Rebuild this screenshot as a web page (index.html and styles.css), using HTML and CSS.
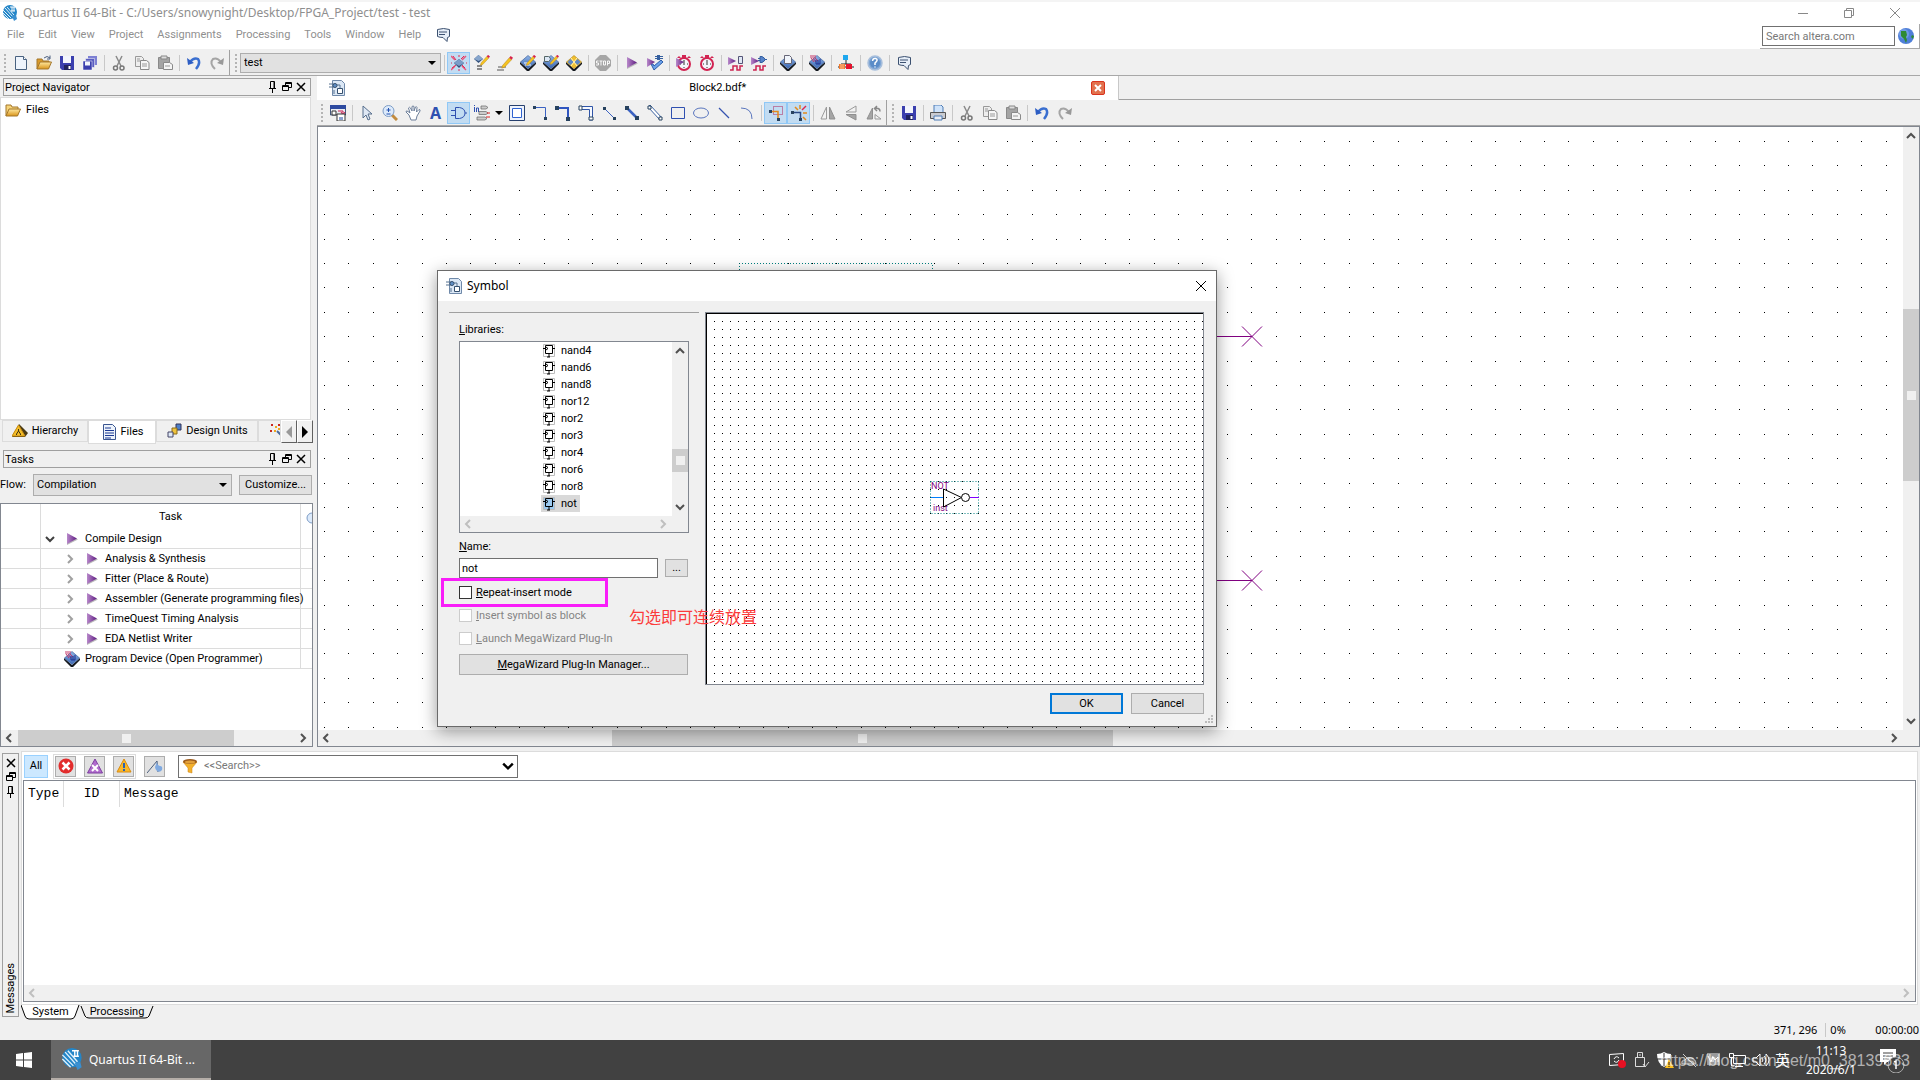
FILE: index.html
```
<!DOCTYPE html>
<html lang="en">
<head>
	<meta charset="utf-8">
	<meta name="viewport" content="width=device-width, initial-scale=1">
	<title>Quartus II 64-Bit</title>
	<link rel="stylesheet" href="styles.css">
</head>
<body>

	<!-- icon set -->
	<svg class="defs" aria-hidden="true">
		<defs>
			<linearGradient id="gChip" x1="0" y1="0" x2="0" y2="1"><stop offset="0" stop-color="#8fb4e6"/><stop offset="1" stop-color="#3a67b4"/></linearGradient>
			<linearGradient id="gGold" x1="0" y1="0" x2="0" y2="1"><stop offset="0" stop-color="#ffe9a0"/><stop offset="1" stop-color="#d9941a"/></linearGradient>
			<linearGradient id="gPurple" x1="0" y1="0" x2="1" y2="0"><stop offset="0" stop-color="#b98acb"/><stop offset="1" stop-color="#5c1a80"/></linearGradient>
			<pattern id="sheetGrid" x="6" y="14" width="122" height="122" patternUnits="userSpaceOnUse">
				<g id="dotRow"><path d="M0 0h1v1h-1zM24 0h1v1h-1zM49 0h1v1h-1zM73 0h1v1h-1zM98 0h1v1h-1z"/></g>
				<use href="#dotRow" y="24"/><use href="#dotRow" y="49"/><use href="#dotRow" y="73"/><use href="#dotRow" y="98"/>
			</pattern>
			<pattern id="previewGrid" x="8" y="8" width="8" height="8" patternUnits="userSpaceOnUse"><path d="M0 0h1v1h-1z"/></pattern>
		</defs>
		<symbol id="i-app" viewBox="0 0 16 16"><circle cx="8" cy="7" r="7" fill="#2486c8"/><path d="M1 5l8 8M1 8l6 6M3 3l8 9M5 2l7 8" stroke="#dff0fb" fill="none"/><path d="M8 2h5M9 6h4M10 2v4M12 2v4" stroke="#fff"/><path d="M10 11l4-1 1 4-3 2z" fill="#3a8fd0"/></symbol>
		<symbol id="i-chat" viewBox="0 0 16 16"><path d="M2.500 2.500q6-2 12 0v7l-2 1-.5 4-4-4q-3 0-5.500-1z" fill="#e6eef8" stroke="#3c5170"/><path d="M4 5h8M4 7.500h6" stroke="#3c5170"/></symbol>
		<symbol id="i-new" viewBox="0 0 16 16"><path d="M2.500 1.500h8l3 3v10h-11z" fill="#eef4fc" stroke="#48617f"/><path d="M10.500 1.500v3h3" fill="#fff" stroke="#48617f"/></symbol>
		<symbol id="i-open" viewBox="0 0 16 16"><path d="M1 14V4h5l1 2h6v3" fill="#d99a2b" stroke="#a3762a"/><path d="M1 14l3-7h11.500l-3 7z" fill="url(#gGold)" stroke="#a3762a"/><path d="M8 3q3-3 6 0M14 .5V4h-3" fill="none" stroke="#4a5f80"/></symbol>
		<symbol id="i-folder" viewBox="0 0 16 16"><path d="M1 14V3h5l1 2h6v3" fill="#f6d47a" stroke="#a3762a"/><path d="M1 14l3-7h11.500l-3 7z" fill="url(#gGold)" stroke="#a3762a"/></symbol>
		<symbol id="i-save" viewBox="0 0 16 16"><path d="M1 1h14v14H3l-2-2z" fill="#3b3fae"/><path d="M4 1h8v7H4z" fill="#f3f5fd"/><path d="M5 10h7v5H5z" fill="#20235f"/><path d="M9.500 11h2v3h-2z" fill="#fff"/></symbol>
		<symbol id="i-saveall" viewBox="0 0 16 16"><path d="M6 1h9v9H6z" fill="#7d80d3"/><path d="M3.500 3.500h9v9h-9z" fill="#5a5ec1" stroke="#fff" stroke-width=".5"/><path d="M1 6h9v9H1z" fill="#3b3fae" stroke="#fff" stroke-width=".5"/><path d="M3 6.500h5v4H3z" fill="#f3f5fd"/></symbol>
		<symbol id="i-cut" viewBox="0 0 16 16"><path d="M5 1l5 10M11 1L6 11" stroke="#8a8a8a" stroke-width="1.500"/><circle cx="4.500" cy="13" r="2" fill="none" stroke="#777" stroke-width="1.500"/><circle cx="11" cy="13" r="2" fill="none" stroke="#777" stroke-width="1.500"/></symbol>
		<symbol id="i-copy" viewBox="0 0 16 16"><path d="M1.500 1.500h6l2 2v8h-8z" fill="#eee" stroke="#999"/><path d="M6.500 5.500h6l2.500 2v7H6.500z" fill="#f7f7f7" stroke="#8a8a8a"/><path d="M3 4h3M3 6h3M8 9h5M8 11h5" stroke="#999"/></symbol>
		<symbol id="i-paste" viewBox="0 0 16 16"><path d="M1.500 2.500h11v11h-11z" fill="#a4a4a4" stroke="#8a8a8a"/><path d="M4 1h6v3H4z" fill="#ddd" stroke="#888"/><path d="M6.500 7.500h6l3 2v5h-9z" fill="#f4f4f4" stroke="#8a8a8a"/><path d="M8 11h5" stroke="#999"/></symbol>
		<symbol id="i-undo" viewBox="0 0 16 16"><path d="M4 7q4-5 8-3 3 4-2 10" fill="none" stroke="#3a6fd0" stroke-width="2.500"/><path d="M1 3l1 7 6-2z" fill="#2d5ec4"/></symbol>
		<symbol id="i-redo" viewBox="0 0 16 16"><path d="M12 7Q8 2 4 4q-4 4 2 10" fill="none" stroke="#a5a5a5" stroke-width="2"/><path d="M15 3l-1 7-6-2z" fill="#999"/></symbol>
		<symbol id="i-chip" viewBox="0 0 16 16"><path d="M0 7l8 7 8-7v2l-7 7H7L0 9z" fill="#14181f"/><path d="M8 .5L15.500 7 8 13.500.5 7z" fill="url(#gChip)" stroke="#3f639c" stroke-width=".7"/></symbol>
		<symbol id="i-pencil" viewBox="0 0 16 16"><path d="M5 11l7-8 2.500 2L7 13l-3 1z" fill="#f5c321" stroke="#b07f13" stroke-width=".5"/><path d="M12 3l1.500-2L16 3l-1.500 2z" fill="#d8234b"/></symbol>
		<symbol id="i-pins" viewBox="0 0 16 16"><path d="M0 1l4 4M15 1l-4 4M0 15l4-4M15 15l-4-4" stroke="#e8557a" stroke-width="1.500"/><path d="M8 0v2M8 14v2M0 8h1M15 8h1M2 1l3 4M13 1l-3 3M1 13l4-3M14 13l-3-3" stroke="#e02c55"/><path d="M8 4l5 4-5 5-5-5z" fill="#34517c"/><path d="M8 4l5 4-5 3-5-3z" fill="#7b9cc8"/></symbol>
		<symbol id="i-asgn" viewBox="0 0 16 16"><path d="M4.500 0L9 4 4.500 8 0 4z" fill="#34517c"/><path d="M4.500 0L9 4 4.500 6 0 4z" fill="#86a5cc"/><path d="M3 11h5M3 14h5" stroke="#222"/><use href="#i-pencil" x="3" y="-1" width="13" height="13"/></symbol>
		<symbol id="i-edit" viewBox="0 0 16 16"><path d="M1 12h8M0 15h7" stroke="#555"/><use href="#i-pencil" x="1" width="15" height="15"/></symbol>
		<symbol id="i-chipedit" viewBox="0 0 16 16"><use href="#i-chip" width="16" height="16"/><path d="M4 8h6M5 10h6" stroke="#fff"/><use href="#i-pencil" x="3" y="-1" width="13" height="13"/></symbol>
		<symbol id="i-chipgate" viewBox="0 0 16 16"><use href="#i-chip" width="16" height="16"/><path d="M1.500 1.500h4q4 2.500 0 5h-4z" fill="#dbe7f6" stroke="#566"/><use href="#i-pencil" x="4" y="-1" width="12" height="12"/></symbol>
		<symbol id="i-chipplan" viewBox="0 0 16 16"><path d="M0 7l8 7 8-7v2l-7 7H7L0 9z" fill="#14181f"/><path d="M8 .5L15.500 7 8 13.500.5 7z" fill="#f1bf2e" stroke="#b98c1a" stroke-width=".7"/><path d="M4.500 4l3 3-3 3-3-3zM11.500 4l3 3-3 3-3-3z" fill="#5d87c6"/><path d="M5 3l6 8M11 3l-6 8" stroke="#fff3b5"/></symbol>
		<symbol id="i-stop" viewBox="0 0 16 16"><path d="M5 0h6l5 5v6l-5 5H5l-5-5V5z" fill="#a6a6a6"/><path d="M3.500 6H1.500v2h2v2H1M4.500 6h3M6 6v4.500M8.500 6h2v4h-2zM12.500 10.500V6h2v2.500h-2" fill="none" stroke="#fff" stroke-width=".9"/></symbol>
		<symbol id="i-play" viewBox="0 0 16 16"><path d="M3 3l11 5.500L3 14z" fill="#bbb"/><path d="M3 2l10 5.500L3 13z" fill="url(#gPurple)"/></symbol>
		<symbol id="i-check" viewBox="0 0 16 16"><path d="M4 9l3 6 9-8-2-2-7 6-1-2z" fill="#6ca2ea" stroke="#2b5ca8"/><path d="M0 3l8 4-8 5z" fill="url(#gPurple)"/><path d="M10 0h3v5h-3z" fill="#345f9f"/><path d="M8 1.500h8M8 3.500h8" stroke="#345f9f"/></symbol>
		<symbol id="i-clock" viewBox="0 0 16 16"><path d="M6 0h4v3H6zM1 3l2-2 2 2M15 3l-2-2-2 2" fill="#d22452"/><circle cx="8" cy="9" r="6" fill="#f4f6fb" stroke="#d22452" stroke-width="2"/><path d="M8 5v5M4 9h1M11 9h1M8 13v-1" stroke="#333"/></symbol>
		<symbol id="i-clockplay" viewBox="0 0 16 16"><use href="#i-clock" width="16" height="16"/><path d="M0 3l8 4-8 5z" fill="url(#gPurple)"/></symbol>
		<symbol id="i-simrtl" viewBox="0 0 16 16"><path d="M0 2l8 4-8 4z" fill="url(#gPurple)"/><path d="M10.500 1.500h4v7h-4z" fill="#dfe8f5" stroke="#557"/><path d="M2 15h3v-4h4v4h3v-4h3" fill="none" stroke="#cc2450" stroke-width="1.500"/></symbol>
		<symbol id="i-simgate" viewBox="0 0 16 16"><path d="M0 2l8 4-8 4z" fill="url(#gPurple)"/><path d="M9 1.500h2q6 3 0 6H9zM7 3.500h2M7 5.500h2M14 4.500h2" fill="#5683c9" stroke="#345f9f"/><path d="M2 15h3v-4h4v4h3v-4h3" fill="none" stroke="#cc2450" stroke-width="1.500"/></symbol>
		<symbol id="i-chippage" viewBox="0 0 16 16"><use href="#i-chip" width="16" height="16"/><path d="M4.500.5h5l2 2v6h-7z" fill="#f1f5fb" stroke="#667"/></symbol>
		<symbol id="i-program" viewBox="0 0 16 16"><use href="#i-chip" width="16" height="16"/><path d="M2 0v3l3 4M4 0v3l3 4M6 0v3l3 3" stroke="#c5386b" fill="none"/><path d="M7 5v4h4V4M9 5v4" fill="none" stroke="#1d2e90"/></symbol>
		<symbol id="i-tree" viewBox="0 0 16 16"><path d="M5 0h5v5H5z" fill="#1ea7ee"/><path d="M8 5v4M3 9h10M0 12h16" stroke="#222"/><path d="M1 9h6v5H1z" fill="#f4792b"/><path d="M8 9h6v5H8z" fill="#e8112d"/><path d="M3 9v5M5 9v5" stroke="#fff" stroke-width=".5"/></symbol>
		<symbol id="i-help" viewBox="0 0 16 16"><circle cx="8" cy="8" r="7" fill="#7ea5d4" stroke="#a8bfdc" stroke-width="1.500"/><circle cx="8" cy="8" r="5" fill="#5a8cc8"/><path d="M5.500 6q.5-3 3-2.500 3 1 .5 3.500L8 8v2M8 11.500v1" fill="none" stroke="#fff" stroke-width="1.500"/></symbol>
		<symbol id="i-globe" viewBox="0 0 16 16"><circle cx="8" cy="8" r="8" fill="#4f7fd9"/><circle cx="6" cy="6" r="5" fill="#86aef0" opacity=".6"/><path d="M3 3l5 0 1 4-1 2 1 3-1 3-2-4-3-3zM14 7l2 1-1 3-2-2z" fill="#2f8a34"/></symbol>
		<symbol id="i-bdf" viewBox="0 0 16 16"><path d="M3.500.5h9l3 3v12h-12z" fill="#dbe7f5" stroke="#6f89a9"/><path d="M0 4h5M0 7h5M8 5h3v4M5 10v4" fill="none" stroke="#54708f"/><circle cx="6" cy="5.500" r="2" fill="#5f8fc6" stroke="#35506e"/><path d="M8.500 8.500h5v5h-5z" fill="#fff" stroke="#35506e"/></symbol>
		<symbol id="i-detach" viewBox="0 0 16 16"><path d="M.5 1h15v9H.5z" fill="#e8ecf3" stroke="#44567b"/><path d="M0 0h16v4H0z" fill="#2d4aa0"/><path d="M8 6h5v3M11 7l2 3 2-3" fill="none" stroke="#cf1c4f"/><path d="M2 6h4v4H2zM7 9h8v7H7z" fill="#fff" stroke="#333"/><path d="M9 12h4v3H9z" fill="#8ba2cf"/></symbol>
		<symbol id="i-pointer" viewBox="0 0 16 16"><path d="M4 1v12l3-3 2 5 2-1-2-5h4z" fill="#dfe8f4" stroke="#566e8d"/></symbol>
		<symbol id="i-zoom" viewBox="0 0 16 16"><path d="M10 10l5 5" stroke="#c28c40" stroke-width="3"/><circle cx="6.500" cy="6" r="5.500" fill="#dceafb" stroke="#7d9cc6"/><path d="M6.500 3v4M4.500 5h4M4.500 9h4" stroke="#2452b0"/></symbol>
		<symbol id="i-hand" viewBox="0 0 16 16"><path d="M4 10L1 7q0-2 2-.5L5 8 3.500 3q1-1.500 2 0L7 6V1.500q1-1 2 0V6l1.500-4q1-1 1.500.5L11.500 7 14 4.500q1.500 0 1 1.500l-3 5-1 4H6z" fill="#fff" stroke="#6d7f9a"/></symbol>
		<symbol id="i-gate" viewBox="0 0 16 16"><path d="M4.500 2.500h4q5.500 1 5.500 5.500t-5.500 5.500h-4zM0 5.500h4M0 10.500h4M14 8h2" fill="none" stroke="#2f50b0"/></symbol>
		<symbol id="i-pinlist" viewBox="0 0 16 16"><path d="M.5 0v1M.5 2v5M2.500 7V3h2v4" fill="none" stroke="#2f50b0"/><path d="M7 1h5l2 1.500L12 4H7zM5 6.500h7L14 8l-2 1.500H5zM3 12h8l2 1.500L11 15H3z" fill="#ccc" stroke="#666" stroke-width=".7"/><path d="M13 8h3M12 12h4" stroke="#d22"/></symbol>
		<symbol id="i-block" viewBox="0 0 16 16"><path d="M.5.5h15v15H.5z" fill="#eef3fc" stroke="#27406e"/><path d="M3.500 3.500h9v9h-9z" fill="#fff" stroke="#2f62d0"/></symbol>
		<symbol id="i-node" viewBox="0 0 16 16"><path d="M3 2.500h10.500V13" fill="none" stroke="#3b62c2"/><path d="M1 1h3v3H1zM12 12h3v3h-3z" fill="#27425f"/></symbol>
		<symbol id="i-bus" viewBox="0 0 16 16"><path d="M3 3h10v10" fill="none" stroke="#2f55c0" stroke-width="2"/><path d="M0 1h4v4H0zM11 12h4v4h-4z" fill="#27425f"/></symbol>
		<symbol id="i-conduit" viewBox="0 0 16 16"><path d="M2 1.500h12.500V15h-3V4.500H2z" fill="#f6f9ff" stroke="#2f55a8"/><path d="M1 1h3v4H1zM11 12h4v3h-4z" fill="#fff" stroke="#27425f"/></symbol>
		<symbol id="i-dnode" viewBox="0 0 16 16"><path d="M3 3l10 10" stroke="#3b62c2"/><path d="M2 2h3v3H2zM12 12h3v3h-3z" fill="#27425f"/></symbol>
		<symbol id="i-dbus" viewBox="0 0 16 16"><path d="M3 3l10 10" stroke="#3b62c2" stroke-width="2.500"/><path d="M1 1h4v4H1zM11 11h4v4h-4z" fill="#27425f"/></symbol>
		<symbol id="i-dconduit" viewBox="0 0 16 16"><path d="M1 2l2-2 12 13-2 2z" fill="#fff" stroke="#3b62a2"/><path d="M1 1h3v3H1zM12 12h3v3h-3z" fill="#fff" stroke="#27425f"/></symbol>
		<symbol id="i-rect" viewBox="0 0 16 16"><path d="M1.500 2.500h13v11h-13z" fill="none" stroke="#2f50b0"/></symbol>
		<symbol id="i-oval" viewBox="0 0 16 16"><ellipse cx="8" cy="8" rx="7.500" ry="5" fill="none" stroke="#5a76be"/></symbol>
		<symbol id="i-line" viewBox="0 0 16 16"><path d="M3 3l10 10" stroke="#3553b0" stroke-width="1.200"/></symbol>
		<symbol id="i-arc" viewBox="0 0 16 16"><path d="M2 3q11 0 11 11" fill="none" stroke="#5a76be"/></symbol>
		<symbol id="i-rubber" viewBox="0 0 16 16"><path d="M5.500 1.500h9v8h-9z" fill="none" stroke="#b1205a" stroke-dasharray="1 1"/><path d="M2 6.500h8v7" fill="none" stroke="#e28a1c" stroke-width="1.500"/><path d="M1 5h3v3H1zM9 13h3v3H9z" fill="#27425f"/></symbol>
		<symbol id="i-partial" viewBox="0 0 16 16"><path d="M2 7.500h7.500V14" fill="none" stroke="#2a4a86" stroke-width="1.500"/><path d="M0 6h3v3H0zM8 13h3v3H8z" fill="#27425f"/><path d="M9 0v4M4 2l3 3M12 8h4M12 12l3 3" stroke="#e28a1c" stroke-width="1.500"/><path d="M15 1l-4 4" stroke="#e0264f" stroke-width="1.500"/></symbol>
		<symbol id="i-fliph" viewBox="0 0 16 16"><path d="M6.500 2v12H1z" fill="#f2f2f2" stroke="#9a9a9a"/><path d="M9.500 2v12H15z" fill="#a5a5a5" stroke="#8f8f8f"/></symbol>
		<symbol id="i-flipv" viewBox="0 0 16 16"><path d="M13 1v6H3z" fill="#f2f2f2" stroke="#9a9a9a"/><path d="M13 15V9.500H3z" fill="#a5a5a5" stroke="#8f8f8f"/></symbol>
		<symbol id="i-rotate" viewBox="0 0 16 16"><path d="M6.500 3v11H1z" fill="#a5a5a5" stroke="#8f8f8f"/><path d="M9 14V9.500l6 4.500z" fill="#f2f2f2" stroke="#9a9a9a"/><path d="M9 3.500q5-1 5 3M11 1L8.500 3.500 11 6" fill="none" stroke="#888" stroke-width="1.500"/></symbol>
		<symbol id="i-print" viewBox="0 0 16 16"><path d="M4 0h7l2 2v6H4z" fill="#cfe3fa" stroke="#4f7db5"/><path d="M.5 7.500h15v6H.5z" fill="#c9cbd1" stroke="#555"/><path d="M4 11h8v4H4z" fill="#e9edf4" stroke="#4f7db5"/></symbol>
		<symbol id="i-warn" viewBox="0 0 16 16"><path d="M8 1l7 13H1z" fill="#fbb828" stroke="#d88b12"/><path d="M8 5v5M8 11v2" stroke="#2b62b5" stroke-width="2"/></symbol>
		<symbol id="i-hier" viewBox="0 0 16 16"><path d="M7 1l9 9-3 4H0z" fill="#4a3a13"/><path d="M6.500 2L13 13H0z" fill="#f3bd28" stroke="#c98c12"/><path d="M6.500 6v2l-2 3v1M6.500 8l2 3v1" fill="none" stroke="#403010"/></symbol>
		<symbol id="i-doc" viewBox="0 0 16 16"><path d="M2.500.5h9l3 3v12h-12z" fill="#edf3fb" stroke="#3a5590"/><path d="M4 4h6M4 6.500h9M4 9h9M4 11.500h9M4 14h6" stroke="#1d3a94"/></symbol>
		<symbol id="i-units" viewBox="0 0 16 16"><path d="M10 1h5v6h-5z" fill="#4d7fc9" stroke="#335"/><path d="M6 5h5v6H6z" fill="#efc23b" stroke="#8a6d1a"/><path d="M2 9h5v5H2z" fill="#dfe9f7" stroke="#446"/></symbol>
		<symbol id="i-wand" viewBox="0 0 16 16"><path d="M8 8l7 7" stroke="#4f6c9c" stroke-width="2"/><path d="M2 1h2v2H2zM9 1h2v2H9zM1 7h2v2H1zM12 5h2v2h-2z" fill="#c8281e"/><path d="M6 3h2v2H6zM5 7h2v2H5zM9 5h2v2H9z" fill="#f0a81e"/></symbol>
		<symbol id="i-err" viewBox="0 0 16 16"><circle cx="8" cy="8" r="7.500" fill="#e22d2d"/><path d="M4.500 4.500l7 7M11.500 4.500l-7 7" stroke="#fff" stroke-width="2.500"/></symbol>
		<symbol id="i-crit" viewBox="0 0 16 16"><path d="M8 1l7.500 14H.5z" fill="#b06ccc" stroke="#7d3da0"/><path d="M5 7l6 6M11 7l-6 6" stroke="#fff" stroke-width="2"/></symbol>
		<symbol id="i-flag" viewBox="0 0 16 16"><path d="M0 15L10 3l1 11" fill="none" stroke="#4c5f7d"/><path d="M10 4q0 3 3 4 3 0 2 4-2 3-5 1-2-2-2-4z" fill="#7fa9e0"/></symbol>
		<symbol id="i-funnel" viewBox="0 0 16 16"><path d="M1 4l5 6v4l4 1v-5l5-6z" fill="#f4b12b" stroke="#c88016" stroke-width=".5"/><ellipse cx="8" cy="3.500" rx="7" ry="2.500" fill="#9c5b1d"/><ellipse cx="8" cy="4" rx="5" ry="1.500" fill="#e2a03a"/></symbol>
		<symbol id="i-sym" viewBox="0 0 12 14"><path d="M.5 12.500V.5h11v12z" stroke="#bdbdbd"/><path d="M2.500 1.500h7v8h-7z" fill="none" stroke="#000"/><path d="M0 4.500h3M9 4.500h3M6 10v3M4 13h3M3 3l2 1.500L3 6" fill="none" stroke="#000"/></symbol>
		<symbol id="i-pin" viewBox="0 0 10 12"><path d="M2.500 7V.5h4V7M1 7.500h7M6 1v6M4.500 8v4" fill="none" stroke="#000"/></symbol>
		<symbol id="i-float" viewBox="0 0 10 10"><path d="M3.500 3V.5h6v5H7M3.500 1.500h6M.5 3.500h6v5h-6zM.5 4.500h6" fill="none" stroke="#000"/></symbol>
		<symbol id="i-x" viewBox="0 0 10 10"><path d="M1 1l8 8M9 1L1 9" stroke="#000" stroke-width="1.500"/></symbol>
		<symbol id="i-left" viewBox="0 0 8 10"><path d="M6 1L2 5l4 4" fill="none" stroke="currentColor" stroke-width="2"/></symbol>
		<symbol id="i-right" viewBox="0 0 8 10"><path d="M2 1l4 4-4 4" fill="none" stroke="currentColor" stroke-width="2"/></symbol>
		<symbol id="i-up" viewBox="0 0 10 8"><path d="M1 6l4-4 4 4" fill="none" stroke="currentColor" stroke-width="2"/></symbol>
		<symbol id="i-down" viewBox="0 0 10 8"><path d="M1 2l4 4 4-4" fill="none" stroke="currentColor" stroke-width="2"/></symbol>
		<symbol id="i-caret" viewBox="0 0 8 4"><path d="M0 0h8L4 4z"/></symbol>
	</svg>

	<div class="titlebar">
		<svg class="ico"><use href="#i-app"/></svg>
		<span class="title">Quartus II 64-Bit - C:/Users/snowynight/Desktop/FPGA_Project/test - test</span>
		<div class="winbtns">
			<button type="button" aria-label="Minimize"><svg width="12" height="12"><path d="M1 6.500h10" stroke="#888"/></svg></button>
			<button type="button" aria-label="Restore"><svg width="12" height="12"><path d="M1.500 3.500h7v7h-7zM3.500 3V1.500h7v7H9" fill="none" stroke="#888"/></svg></button>
			<button type="button" aria-label="Close"><svg width="12" height="12"><path d="M1 1l10 10M11 1L1 11" stroke="#888"/></svg></button>
		</div>
	</div>

	<div class="menubar">
		<nav>
			<a href="#">File</a><a href="#">Edit</a><a href="#">View</a><a href="#">Project</a><a href="#">Assignments</a><a href="#">Processing</a><a href="#">Tools</a><a href="#">Window</a><a href="#">Help</a>
			<svg class="ico"><use href="#i-chat"/></svg>
		</nav>
		<div class="websearch">
			<input type="text" placeholder="Search altera.com" aria-label="Search altera.com">
			<svg class="ico"><use href="#i-globe"/></svg>
		</div>
	</div>

	<div class="toolbar main-tools">
		<span class="grip"></span>
		<button type="button"><svg class="ico"><use href="#i-new"/></svg></button>
		<button type="button"><svg class="ico"><use href="#i-open"/></svg></button>
		<button type="button"><svg class="ico"><use href="#i-save"/></svg></button>
		<button type="button"><svg class="ico"><use href="#i-saveall"/></svg></button>
		<span class="sep"></span>
		<button type="button"><svg class="ico"><use href="#i-cut"/></svg></button>
		<button type="button"><svg class="ico"><use href="#i-copy"/></svg></button>
		<button type="button"><svg class="ico"><use href="#i-paste"/></svg></button>
		<span class="sep"></span>
		<button type="button"><svg class="ico"><use href="#i-undo"/></svg></button>
		<button type="button"><svg class="ico"><use href="#i-redo"/></svg></button>
		<span class="divider"></span>
		<span class="grip"></span>
		<div class="combo revision">
			<select aria-label="Revision"><option>test</option></select>
			<svg class="caret"><use href="#i-caret"/></svg>
		</div>
		<span class="sep"></span>
		<button type="button" class="on"><svg class="ico"><use href="#i-pins"/></svg></button>
		<button type="button"><svg class="ico"><use href="#i-asgn"/></svg></button>
		<button type="button"><svg class="ico"><use href="#i-edit"/></svg></button>
		<button type="button"><svg class="ico"><use href="#i-chipedit"/></svg></button>
		<button type="button"><svg class="ico"><use href="#i-chipgate"/></svg></button>
		<button type="button"><svg class="ico"><use href="#i-chipplan"/></svg></button>
		<span class="sep"></span>
		<button type="button"><svg class="ico"><use href="#i-stop"/></svg></button>
		<span class="sep"></span>
		<button type="button"><svg class="ico"><use href="#i-play"/></svg></button>
		<button type="button"><svg class="ico"><use href="#i-check"/></svg></button>
		<span class="sep"></span>
		<button type="button"><svg class="ico"><use href="#i-clockplay"/></svg></button>
		<button type="button"><svg class="ico"><use href="#i-clock"/></svg></button>
		<span class="sep"></span>
		<button type="button"><svg class="ico"><use href="#i-simrtl"/></svg></button>
		<button type="button"><svg class="ico"><use href="#i-simgate"/></svg></button>
		<span class="sep"></span>
		<button type="button"><svg class="ico"><use href="#i-chippage"/></svg></button>
		<span class="sep"></span>
		<button type="button"><svg class="ico"><use href="#i-program"/></svg></button>
		<span class="sep"></span>
		<button type="button"><svg class="ico"><use href="#i-tree"/></svg></button>
		<span class="sep"></span>
		<button type="button"><svg class="ico"><use href="#i-help"/></svg></button>
		<span class="sep"></span>
		<button type="button"><svg class="ico"><use href="#i-chat"/></svg></button>
	</div>

	<div class="work">
		<aside class="dock">
			<div class="dock-head">
				<span>Project Navigator</span>
				<svg class="i-pin"><use href="#i-pin"/></svg><svg class="i10"><use href="#i-float"/></svg><svg class="i10"><use href="#i-x"/></svg>
			</div>
			<div class="files">
				<div class="files-row"><svg class="ico"><use href="#i-folder"/></svg>Files</div>
			</div>
			<div class="dock-tabs">
				<button type="button" class="t-hier"><svg class="ico"><use href="#i-hier"/></svg>Hierarchy</button>
				<button type="button" class="t-files active"><svg class="ico"><use href="#i-doc"/></svg>Files</button>
				<button type="button" class="t-units"><svg class="ico"><use href="#i-units"/></svg>Design Units</button>
				<button type="button" class="t-more" aria-label="IP Components"><svg class="ico"><use href="#i-wand"/></svg></button>
				<button type="button" class="scroll" aria-label="Previous tabs"><svg width="6" height="12"><path d="M6 0v12L0 6z" fill="#999"/></svg></button>
				<button type="button" class="scroll" aria-label="More tabs"><svg width="6" height="12"><path d="M0 0v12l6-6z"/></svg></button>
			</div>

			<div class="dock-head">
				<span>Tasks</span>
				<svg class="i-pin"><use href="#i-pin"/></svg><svg class="i10"><use href="#i-float"/></svg><svg class="i10"><use href="#i-x"/></svg>
			</div>
			<div class="flow">
				<label for="flow">Flow:</label>
				<div class="combo">
					<select id="flow"><option>Compilation</option></select>
					<svg class="caret"><use href="#i-caret"/></svg>
				</div>
				<button type="button" class="btn">Customize...</button>
			</div>
			<div class="tasks">
				<table>
					<colgroup><col class="c-status"><col><col class="c-time"></colgroup>
					<thead><tr><th></th><th>Task</th><th><svg width="10" height="14"><circle cx="10" cy="8" r="5" fill="#dceafb" stroke="#7d9cc6"/></svg></th></tr></thead>
					<tbody>
						<tr><td></td><td><div class="task l0"><svg class="exp dark"><use href="#i-down"/></svg><svg class="ico"><use href="#i-play"/></svg>Compile Design</div></td><td></td></tr>
						<tr><td></td><td><div class="task l1"><svg class="exp"><use href="#i-right"/></svg><svg class="ico"><use href="#i-play"/></svg>Analysis &amp; Synthesis</div></td><td></td></tr>
						<tr><td></td><td><div class="task l1"><svg class="exp"><use href="#i-right"/></svg><svg class="ico"><use href="#i-play"/></svg>Fitter (Place &amp; Route)</div></td><td></td></tr>
						<tr><td></td><td><div class="task l1"><svg class="exp"><use href="#i-right"/></svg><svg class="ico"><use href="#i-play"/></svg>Assembler (Generate programming files)</div></td><td></td></tr>
						<tr><td></td><td><div class="task l1"><svg class="exp"><use href="#i-right"/></svg><svg class="ico"><use href="#i-play"/></svg>TimeQuest Timing Analysis</div></td><td></td></tr>
						<tr><td></td><td><div class="task l1"><svg class="exp"><use href="#i-right"/></svg><svg class="ico"><use href="#i-play"/></svg>EDA Netlist Writer</div></td><td></td></tr>
						<tr><td></td><td><div class="task l0"><svg class="exp"></svg><svg class="ico"><use href="#i-program"/></svg>Program Device (Open Programmer)</div></td><td></td></tr>
					</tbody>
				</table>
				<div class="hbar">
					<svg><use href="#i-left"/></svg>
					<div class="track"><div class="thumb task-thumb"></div></div>
					<svg><use href="#i-right"/></svg>
				</div>
			</div>
		</aside>

		<main class="editor">
			<div class="doc-tabs">
				<div class="doc-tab">
					<svg class="ico"><use href="#i-bdf"/></svg>
					<span>Block2.bdf*</span>
					<button type="button" aria-label="Close tab"><svg width="8" height="8"><path d="M1 1l6 6M7 1L1 7" stroke="#fff" stroke-width="2"/></svg></button>
				</div>
				<div class="doc-rest"></div>
			</div>
			<div class="toolbar doc-tools">
				<span class="grip"></span>
				<button type="button"><svg class="ico"><use href="#i-detach"/></svg></button>
				<span class="sep"></span>
				<button type="button"><svg class="ico"><use href="#i-pointer"/></svg></button>
				<button type="button"><svg class="ico"><use href="#i-zoom"/></svg></button>
				<button type="button"><svg class="ico"><use href="#i-hand"/></svg></button>
				<button type="button" class="txt-tool">A</button>
				<button type="button" class="on"><svg class="ico"><use href="#i-gate"/></svg></button>
				<button type="button"><svg class="ico"><use href="#i-pinlist"/></svg></button>
				<button type="button" class="drop" aria-label="Pin type"><svg class="caret"><use href="#i-caret"/></svg></button>
				<button type="button"><svg class="ico"><use href="#i-block"/></svg></button>
				<button type="button"><svg class="ico"><use href="#i-node"/></svg></button>
				<button type="button"><svg class="ico"><use href="#i-bus"/></svg></button>
				<button type="button"><svg class="ico"><use href="#i-conduit"/></svg></button>
				<button type="button"><svg class="ico"><use href="#i-dnode"/></svg></button>
				<button type="button"><svg class="ico"><use href="#i-dbus"/></svg></button>
				<button type="button"><svg class="ico"><use href="#i-dconduit"/></svg></button>
				<button type="button"><svg class="ico"><use href="#i-rect"/></svg></button>
				<button type="button"><svg class="ico"><use href="#i-oval"/></svg></button>
				<button type="button"><svg class="ico"><use href="#i-line"/></svg></button>
				<button type="button"><svg class="ico"><use href="#i-arc"/></svg></button>
				<span class="sep"></span>
				<button type="button" class="on"><svg class="ico"><use href="#i-rubber"/></svg></button>
				<button type="button" class="on"><svg class="ico"><use href="#i-partial"/></svg></button>
				<span class="sep"></span>
				<button type="button"><svg class="ico"><use href="#i-fliph"/></svg></button>
				<button type="button"><svg class="ico"><use href="#i-flipv"/></svg></button>
				<button type="button"><svg class="ico"><use href="#i-rotate"/></svg></button>
				<span class="divider"></span>
				<span class="grip"></span>
				<button type="button"><svg class="ico"><use href="#i-save"/></svg></button>
				<span class="sep"></span>
				<button type="button"><svg class="ico"><use href="#i-print"/></svg></button>
				<span class="sep"></span>
				<button type="button"><svg class="ico"><use href="#i-cut"/></svg></button>
				<button type="button"><svg class="ico"><use href="#i-copy"/></svg></button>
				<button type="button"><svg class="ico"><use href="#i-paste"/></svg></button>
				<span class="sep"></span>
				<button type="button"><svg class="ico"><use href="#i-undo"/></svg></button>
				<button type="button"><svg class="ico"><use href="#i-redo"/></svg></button>
			</div>
			<div class="sheet">
				<div class="sheet-main">
					<svg class="drawing">
						<rect width="100%" height="100%" fill="url(#sheetGrid)" shape-rendering="crispEdges"/>
						<path d="M421.500 200v-63.500h193V200" fill="none" stroke="#008080" stroke-dasharray="1 2"/>
						<path d="M860 209.500h74M860 453.500h74" stroke="#800080"/>
						<path d="M924 199.500l20 20M944 199.500l-20 20M924 443.500l20 20M944 443.500l-20 20" stroke="#800080"/>
					</svg>
					<div class="vbar">
						<svg><use href="#i-up"/></svg>
						<div class="track"><div class="thumb sheet-vthumb"></div></div>
						<svg><use href="#i-down"/></svg>
					</div>
				</div>
				<div class="hbar">
					<svg><use href="#i-left"/></svg>
					<div class="track"><div class="thumb sheet-thumb"></div></div>
					<svg><use href="#i-right"/></svg>
					<span class="corner"></span>
				</div>
			</div>
		</main>
	</div>

	<!-- message window -->
	<section class="messages">
		<div class="msg-side">
			<svg class="i10"><use href="#i-x"/></svg>
			<svg class="i10"><use href="#i-float"/></svg>
			<svg class="i-pin"><use href="#i-pin"/></svg>
			<span>Messages</span>
		</div>
		<div class="msg-body">
			<div class="msg-pane">
				<div class="msg-tools">
					<button type="button" class="all">All</button>
					<div class="filters">
						<button type="button" aria-label="Errors"><svg class="ico"><use href="#i-err"/></svg></button>
						<button type="button" aria-label="Critical warnings"><svg class="ico"><use href="#i-crit"/></svg></button>
						<button type="button" aria-label="Warnings"><svg class="ico"><use href="#i-warn"/></svg></button>
					</div>
					<button type="button" class="flag" aria-label="Flagged"><svg class="ico"><use href="#i-flag"/></svg></button>
					<div class="msg-search">
						<svg class="ico"><use href="#i-funnel"/></svg>
						<input type="text" placeholder="&lt;&lt;Search&gt;&gt;" aria-label="Search messages">
						<svg class="chev"><use href="#i-down"/></svg>
					</div>
				</div>
				<div class="msg-list">
					<table>
						<colgroup><col class="m-type"><col class="m-id"><col></colgroup>
						<thead><tr><th>Type</th><th class="mid">ID</th><th>Message</th></tr></thead>
					</table>
					<div class="hbar off">
						<svg><use href="#i-left"/></svg><div class="track"></div><svg><use href="#i-right"/></svg>
					</div>
				</div>
			</div>
			<div class="msg-tabs">
				<button type="button" class="active"><svg width="59" height="15"><path d="M0 0l4 11q1 3 4 3h42q3 0 4-3l4-11" fill="#fff" stroke="#000"/></svg><span>System</span></button>
				<button type="button"><svg width="74" height="15"><path d="M1 1l4 10q1 2 4 2h56q3 0 4-2l4-10" fill="#f0f0f0" stroke="#000"/></svg><span>Processing</span></button>
			</div>
		</div>
	</section>

	<footer class="status">
		<span>371, 296</span>
		<span class="pct">0%</span>
		<span>00:00:00</span>
	</footer>

	<div class="taskbar">
		<button type="button" class="start" aria-label="Start"><svg width="16" height="16"><path d="M0 2l7-1v6.500H0zM8 1l8-1v7.500H8zM0 8.500h7V15l-7-1zM8 8.500h8V16l-8-1z" fill="#fff"/></svg></button>
		<button type="button" class="app"><svg width="22" height="22"><use href="#i-app"/></svg>Quartus II 64-Bit ...</button>
		<div class="tray">
			<svg viewBox="0 0 20 20"><path d="M2.500 4.500l14-1v11l-14 1z" fill="none" stroke="#fff"/><path d="M7 9q2-4 5-1M12 10q-2 4-5 1" fill="none" stroke="#fff"/><circle cx="15" cy="14" r="4" fill="#e81123"/></svg>
			<svg viewBox="0 0 20 20"><path d="M6.500 7.500V2.500h5v5M4.500 7.500h9v9h-9zM8 5h2M12 14l2 3 4-5" fill="none" stroke="#ddd"/></svg>
			<svg viewBox="0 0 20 20"><path d="M9 2q3 2 7 2 0 9-7 13-7-4-7-13 4 0 7-2z" fill="#fff"/><path d="M9 3v13M2 9h13" stroke="#333"/><path d="M14 9l5 9h-9z" fill="#fcbf1f"/><path d="M14 12v3M14 16v1" stroke="#222"/></svg>
			<svg viewBox="0 0 20 20"><path d="M3 14q-1-4 3-4 2-4 6-2 5 1 5 6zM4 4l13 13" fill="#777" stroke="#ccc"/></svg>
			<svg viewBox="0 0 20 20"><path d="M4 3h13v12H4z" fill="#999"/><path d="M5 6l3 6 2-6M10 12V7l2 3 3-3v5" fill="none" stroke="#fff"/></svg>
			<svg viewBox="0 0 20 20"><path d="M6.500 5.500h12v8h-12zM8 16.500h8M12 13v3M2.500 3.500h4v4h-4zM4.500 8v8h3" fill="none" stroke="#fff"/></svg>
			<svg viewBox="0 0 20 20"><path d="M2 8h3l4-4v12l-4-4H2zM11 8q2 2 0 4M13 6q4 4 0 8M15 4q6 6 0 12" fill="none" stroke="#fff"/></svg>
			<span class="ime">英</span>
			<time><span>11:13</span><span>2020/6/1</span></time>
			<svg class="note" viewBox="0 0 26 26"><path d="M1 2h16v13h-9l-3 3v-3H1z" fill="#fff"/><path d="M4 6h10M4 9h10M4 12h6" stroke="#414141"/><circle cx="17" cy="18" r="8" fill="#414141" stroke="#aaa"/><path d="M15 15l2-1v8" fill="none" stroke="#fff" stroke-width="1.500"/></svg>
		</div>
		<span class="mark">https://blog.csdn.net/m0_38139633</span>
	</div>

	<!-- Symbol dialog -->
	<div class="dialog" role="dialog" aria-label="Symbol">
		<div class="dlg-title">
			<svg class="ico"><use href="#i-bdf"/></svg>
			<span>Symbol</span>
			<button type="button" aria-label="Close"><svg width="12" height="12"><path d="M1 1l10 10M11 1L1 11" stroke="#000"/></svg></button>
		</div>
		<div class="dlg-main">
			<form class="dlg-left" onsubmit="return false">
				<div class="label"><u>L</u>ibraries:</div>
				<div class="libs">
					<div class="libs-main">
						<ul>
							<li><span><svg><use href="#i-sym"/></svg>nand4</span></li>
							<li><span><svg><use href="#i-sym"/></svg>nand6</span></li>
							<li><span><svg><use href="#i-sym"/></svg>nand8</span></li>
							<li><span><svg><use href="#i-sym"/></svg>nor12</span></li>
							<li><span><svg><use href="#i-sym"/></svg>nor2</span></li>
							<li><span><svg><use href="#i-sym"/></svg>nor3</span></li>
							<li><span><svg><use href="#i-sym"/></svg>nor4</span></li>
							<li><span><svg><use href="#i-sym"/></svg>nor6</span></li>
							<li><span><svg><use href="#i-sym"/></svg>nor8</span></li>
							<li class="sel"><span><svg><use href="#i-sym"/></svg>not</span></li>
						</ul>
						<div class="vbar">
							<svg><use href="#i-up"/></svg>
							<div class="track"><div class="thumb libs-thumb"></div></div>
							<svg><use href="#i-down"/></svg>
						</div>
					</div>
					<div class="hbar off">
						<svg><use href="#i-left"/></svg><div class="track"></div><svg><use href="#i-right"/></svg><span class="corner"></span>
					</div>
				</div>
				<label class="label" for="symname"><u>N</u>ame:</label>
				<div class="name-row">
					<input type="text" id="symname" value="not">
					<button type="button" class="btn">...</button>
				</div>
				<div class="checks">
					<div class="hilite"></div>
					<label><input type="checkbox"><span><u>R</u>epeat-insert mode</span></label>
					<label class="dis"><input type="checkbox" disabled><span><u>I</u>nsert symbol as block</span></label>
					<label class="dis"><input type="checkbox" disabled><span><u>L</u>aunch MegaWizard Plug-In</span></label>
				</div>
				<button type="button" class="btn wizard"><span><u>M</u>egaWizard Plug-In Manager...</span></button>
			</form>
			<div class="dlg-right">
				<div class="preview">
					<svg>
						<rect width="100%" height="100%" fill="url(#previewGrid)" shape-rendering="crispEdges"/>
						<path d="M224.500 168.500h48v32h-48z" fill="none" stroke="#008080" stroke-dasharray="1 2"/>
						<text x="225" y="176">NOT</text>
						<text x="227" y="198">inst</text>
						<path d="M225 184.500h12" stroke="#0080ff"/>
						<path d="M264 184.500h9" stroke="#8000ff"/>
						<path d="M237.500 176v18l18-9.500z" fill="none" stroke="#000"/>
						<circle cx="259.500" cy="184.500" r="4" fill="#fff" stroke="#000"/>
					</svg>
				</div>
				<div class="dlg-btns">
					<button type="button" class="btn ok">OK</button>
					<button type="button" class="btn">Cancel</button>
				</div>
			</div>
		</div>
		<span class="tip">勾选即可连续放置</span>
		<svg class="resize" width="9" height="9"><path d="M6 0h2v2H6zM3 3h2v2H3zM6 3h2v2H6zM0 6h2v2H0zM3 6h2v2H3zM6 6h2v2H6z" fill="#bbb"/></svg>
	</div>

</body>
</html>
```
FILE: styles.css
```
* {
	box-sizing: border-box;
}
body {
	margin: 0;
	height: 100vh;
	display: flex;
	flex-direction: column;
	overflow: hidden;
	background: #f0f0f0;
	color: #000;
	font: 11px/14px Roboto, "Noto Sans CJK SC", sans-serif;
}
button, input, select {
	font: inherit;
	color: inherit;
	margin: 0;
	padding: 0;
	border: 0;
	background: none;
	border-radius: 0;
}
svg {
	display: block;
	flex: none;
}
.defs {
	position: absolute;
	width: 0;
	height: 0;
}
.ico {
	width: 16px;
	height: 16px;
}
.i10 {
	width: 10px;
	height: 10px;
}
.i-pin {
	width: 10px;
	height: 12px;
}
.caret {
	width: 8px;
	height: 4px;
}

/* title and menu */
.titlebar {
	height: 24px;
	display: flex;
	align-items: center;
	padding: 0 2px;
	background: #fff;
	border-top: 2px solid #f4f4f4;
	color: #8f8f8f;
}
.title {
	flex: 1;
	padding-left: 5px;
	font: 12px/18px "Noto Sans", sans-serif;
}
.winbtns {
	display: flex;
}
.winbtns button {
	width: 46px;
	display: flex;
	justify-content: center;
}
.menubar {
	height: 26px;
	display: flex;
	justify-content: space-between;
	background: #fff;
	border-bottom: 1px solid #f0f0f0;
}
.menubar nav {
	display: flex;
	align-items: center;
	gap: 14px;
	padding: 0 0 4px 7px;
}
.menubar a {
	color: #8f8f8f;
	text-decoration: none;
}
.websearch {
	display: flex;
	align-items: center;
	gap: 3px;
	padding: 0 5px 0 2px;
	border-bottom: 1px solid #a8a8a8;
	border-right: 1px solid #a8a8a8;
}
.websearch input {
	width: 133px;
	height: 20px;
	padding-left: 3px;
	border: 1px solid #707070;
}
::placeholder {
	color: #787878;
	opacity: 1;
}

/* toolbars */
.toolbar {
	height: 26px;
	display: flex;
	align-items: center;
	border-bottom: 1px solid #a8a8a8;
}
.toolbar button {
	width: 23px;
	height: 22px;
	display: flex;
	align-items: center;
	justify-content: center;
}
.toolbar .on {
	background: #c2dcf2;
	border: 1px solid #90c8f6;
}
.toolbar .drop {
	width: 12px;
}
.grip {
	width: 2px;
	height: 18px;
	margin: 0 3px 0 4px;
	background: repeating-linear-gradient(#b4b4b4 0 2px, transparent 2px 4px);
}
.sep {
	width: 6px;
	height: 16px;
	background: linear-gradient(#c8c8c8, #c8c8c8) center / 1px 100% no-repeat;
}
.divider {
	width: 1px;
	height: 25px;
	margin: 0 1px;
	background: #a0a0a0;
}
.toolbar .txt-tool {
	color: #2f50b0;
	font: bold 16px/20px "Noto Sans", sans-serif;
}
.combo {
	position: relative;
}
.combo select {
	width: 100%;
	height: 100%;
	padding-left: 3px;
	appearance: none;
	background: #e1e1e1;
	border: 1px solid #adadad;
}
.combo .caret {
	position: absolute;
	right: 5px;
	top: calc(50% - 2px);
}
.revision {
	width: 201px;
	height: 20px;
}

/* left dock */
.work {
	flex: 1;
	min-height: 0;
	display: flex;
	gap: 4px;
}
.dock {
	width: 313px;
	display: flex;
	flex-direction: column;
	padding-top: 2px;
}
.dock-head {
	height: 18px;
	margin: 0 2px 1px 3px;
	padding: 0 4px 0 1px;
	display: flex;
	align-items: center;
	gap: 4px;
	border: 1px solid #a0a0a0;
}
.dock-head span {
	flex: 1;
	padding-top: 2px;
}
.files {
	flex: 1;
	margin: 0 2px 0 0;
	padding: 4px;
	background: #fff;
	border: 1px solid #dcdcdc;
}
.files-row {
	display: flex;
	align-items: center;
	gap: 5px;
}
.dock-tabs {
	height: 24px;
	margin-bottom: 6px;
	padding-left: 2px;
	display: flex;
	align-items: flex-start;
}
.dock-tabs button {
	height: 22px;
	display: flex;
	align-items: center;
	justify-content: center;
	gap: 4px;
	border: 1px solid #dcdcdc;
	white-space: nowrap;
	overflow: hidden;
}
.dock-tabs .t-hier { width: 86px; }
.dock-tabs .t-files { width: 68px; }
.dock-tabs .t-units { width: 102px; }
.dock-tabs .t-more {
	width: 23px;
	justify-content: flex-start;
	padding-left: 10px;
}
.dock-tabs .active {
	height: 24px;
	background: #fff;
}
.dock-tabs .scroll {
	width: 16px;
	height: 23px;
	border: 1px solid #fff;
	border-right-color: #606060;
	border-bottom-color: #606060;
}
.flow {
	display: flex;
	align-items: center;
	margin: 5px 1px 7px 0;
	height: 22px;
}
.flow label {
	width: 33px;
}
.flow .combo {
	flex: 1;
	height: 22px;
	margin-right: 7px;
}
.btn {
	background: #e1e1e1;
	border: 1px solid #adadad;
}
.flow .btn {
	width: 73px;
	height: 20px;
}
.tasks {
	height: 244px;
	display: flex;
	flex-direction: column;
	justify-content: space-between;
	background: #fff;
	border: 1px solid #828790;
}
table {
	width: 100%;
	table-layout: fixed;
	border-collapse: separate;
	border-spacing: 0;
}
th {
	font-weight: normal;
	padding: 0;
}
td {
	padding: 0;
	height: 20px;
	border-bottom: 1px solid #dcdcdc;
	border-right: 1px solid #dcdcdc;
}
.tasks th {
	height: 25px;
	border-right: 1px solid #dcdcdc;
}
.tasks th:last-child, .tasks td:last-child {
	border-right: 0;
}
.tasks th svg {
	margin-left: 1px;
}
.c-status { width: 40px; }
.c-time { width: 11px; }
.task {
	display: flex;
	align-items: center;
	white-space: nowrap;
}
.l0 { padding-left: 4px; }
.l1 { padding-left: 24px; }
.exp {
	width: 10px;
	height: 10px;
	margin-right: 9px;
	color: #a0a0a0;
}
.exp.dark {
	color: #404040;
}
.task .ico {
	margin-right: 5px;
}

/* scroll bars */
.hbar {
	height: 16px;
	display: flex;
	align-items: center;
	background: #f0f0f0;
	color: #505050;
}
.hbar svg {
	width: 8px;
	height: 10px;
	margin: 0 5px 0 4px;
}
.off {
	color: #bfbfbf;
}
.track {
	flex: 1;
	min-width: 0;
	min-height: 0;
}
.thumb {
	height: 16px;
	background: linear-gradient(#f0f0f0, #f0f0f0) center / 9px 9px no-repeat #cdcdcd;
}
.corner {
	width: 16px;
	height: 16px;
}
.vbar {
	width: 16px;
	display: flex;
	flex-direction: column;
	align-items: center;
	background: #f0f0f0;
	color: #505050;
}
.vbar svg {
	width: 10px;
	height: 8px;
	margin: 5px 0;
}
.vbar .track {
	width: 16px;
}
.task-thumb { width: 78%; }
.sheet-thumb { width: 501px; margin-left: 277px; }
.sheet-vthumb { height: 172px; margin-top: 164px; }
.libs-thumb { height: 23px; margin-top: 89px; }

/* block editor */
.editor {
	flex: 1;
	min-width: 0;
	display: flex;
	flex-direction: column;
}
.doc-tabs {
	height: 24px;
	display: flex;
}
.doc-tab {
	width: 50%;
	display: flex;
	align-items: center;
	padding: 0 13px 0 12px;
	background: #fff;
	border-right: 1px solid #c8c8c8;
}
.doc-tab span {
	flex: 1;
	text-align: center;
	font-size: 11px;
}
.doc-tab button {
	width: 14px;
	height: 14px;
	display: flex;
	align-items: center;
	justify-content: center;
	background: #e2714d;
	border: 1px solid #d9331d;
	border-radius: 2px;
}
.doc-rest {
	flex: 1;
	border-bottom: 1px solid #a0a0a0;
}
.sheet {
	flex: 1;
	min-height: 0;
	display: flex;
	flex-direction: column;
	background: #fff;
	border: 1px solid #828790;
}
.sheet-main {
	flex: 1;
	min-height: 0;
	display: flex;
}
.drawing {
	flex: 1;
	min-width: 0;
	height: 100%;
}

/* messages */
.messages {
	display: flex;
	gap: 2px;
	height: 273px;
	padding: 4px 2px 0;
}
.msg-side {
	width: 17px;
	margin: 2px 0 3px;
	padding: 4px 0 3px;
	display: flex;
	flex-direction: column;
	align-items: center;
	gap: 4px;
	border: 1px solid #a0a0a0;
}
.msg-side span {
	margin-top: auto;
	writing-mode: vertical-rl;
	transform: rotate(180deg);
}
.msg-body {
	flex: 1;
	display: flex;
	flex-direction: column;
}
.msg-pane {
	flex: 1;
	display: flex;
	flex-direction: column;
	padding: 1px 1px 2px;
	background: #fff;
	border: 1px solid #dcdcdc;
}
.msg-tools {
	display: flex;
	align-items: center;
	height: 26px;
	margin-bottom: 1px;
}
.msg-tools button {
	width: 21px;
	height: 21px;
	display: flex;
	align-items: center;
	justify-content: center;
	background: #e1e1e1;
	border: 1px solid #adadad;
}
.msg-tools .all {
	width: 24px;
	height: 23px;
	margin: 0 5px 0 1px;
	background: #cce8ff;
	border-color: #99d1ff;
}
.filters {
	display: flex;
	gap: 8px;
	padding: 1px;
	border: 1px solid #dcdcdc;
}
.msg-tools .flag {
	margin: 0 13px 0 8px;
}
.msg-search {
	width: 340px;
	height: 23px;
	display: flex;
	align-items: center;
	gap: 6px;
	padding: 0 3px;
	border: 1px solid #707070;
}
.msg-search input {
	flex: 1;
}
.chev {
	width: 12px;
	height: 10px;
}
.msg-list {
	flex: 1;
	display: flex;
	flex-direction: column;
	justify-content: space-between;
	border: 1px solid #828790;
}
.msg-list th {
	height: 26px;
	padding-left: 4px;
	border-right: 1px solid #dcdcdc;
	text-align: left;
	font: 13px/16px "Liberation Mono", monospace;
}
.msg-list .mid {
	padding: 0;
	text-align: center;
}
.msg-list th:last-child {
	border-right: 0;
}
.m-type { width: 40px; }
.m-id { width: 56px; }
.msg-tabs {
	display: flex;
	height: 15px;
}
.msg-tabs button {
	position: relative;
}
.msg-tabs span {
	position: absolute;
	inset: 0;
	line-height: 14px;
	text-align: center;
}

.status {
	height: 20px;
	display: flex;
	justify-content: flex-end;
	align-items: center;
	padding-right: 1px;
	font-family: "Noto Sans", sans-serif;
}
.pct {
	width: 50px;
	margin-left: 8px;
	padding-left: 4px;
	border-left: 1px solid #c8c8c8;
}

/* windows taskbar */
.taskbar {
	position: relative;
	height: 40px;
	display: flex;
	background: #414141;
	color: #fff;
	font: 12px/19px "Noto Sans", "Noto Sans CJK SC", sans-serif;
}
.start {
	width: 51px;
	display: flex;
	align-items: center;
	padding-left: 16px;
}
.app {
	width: 160px;
	display: flex;
	align-items: center;
	gap: 6px;
	padding-left: 10px;
	background: #676767;
	border-bottom: 2px solid #b5aea8;
}
.tray {
	margin-left: auto;
	display: flex;
	align-items: center;
	gap: 4px;
	padding-right: 15px;
}
.tray svg {
	width: 20px;
	height: 20px;
}
.ime {
	width: 20px;
	font-size: 15px;
}
.tray time {
	width: 64px;
	margin-right: 12px;
	display: flex;
	flex-direction: column;
	align-items: center;
}
.tray .note {
	width: 26px;
	height: 26px;
}
.mark {
	position: absolute;
	right: 10px;
	top: 11px;
	color: rgba(255, 255, 255, .6);
	font: 16px/20px "Liberation Sans", sans-serif;
}

/* symbol dialog */
.dialog {
	position: absolute;
	left: 437px;
	top: 270px;
	width: 780px;
	height: 457px;
	display: flex;
	flex-direction: column;
	background: #f0f0f0;
	border: 1px solid #6a6a6a;
	box-shadow: 0 4px 16px rgba(0, 0, 0, .4);
}
.dlg-title {
	height: 30px;
	display: flex;
	align-items: center;
	gap: 5px;
	padding: 0 9px 1px 8px;
	background: #fff;
	font: 12px/18px "Noto Sans", sans-serif;
}
.dlg-title span {
	flex: 1;
}
.dlg-main {
	flex: 1;
	display: flex;
	gap: 6px;
	padding: 11px 12px 12px 11px;
}
.dlg-left {
	width: 250px;
	padding: 9px 10px 0;
	border-top: 1px solid #a0a0a0;
}
.label {
	display: block;
	height: 19px;
	padding-top: 1px;
}
.libs {
	height: 192px;
	margin-bottom: 6px;
	display: flex;
	flex-direction: column;
	background: #fff;
	border: 1px solid #828790;
}
.libs-main {
	flex: 1;
	display: flex;
}
.libs ul {
	flex: 1;
	margin: 0;
	padding: 0;
	list-style: none;
}
.libs li {
	display: flex;
	height: 17px;
	line-height: 17px;
	padding-left: 81px;
}
.libs li span {
	display: flex;
	align-items: center;
	gap: 6px;
	padding: 0 3px 0 2px;
}
.libs li svg {
	width: 12px;
	height: 14px;
	fill: #fff;
}
.libs .sel span {
	background: #d9d9d9;
}
.libs .sel svg {
	fill: #9ccaf0;
}
.name-row {
	display: flex;
	align-items: center;
	justify-content: space-between;
	padding-right: 1px;
}
.name-row input {
	width: 199px;
	height: 20px;
	padding-left: 2px;
	background: #fff;
	border: 1px solid #707070;
}
.name-row .btn {
	width: 23px;
	height: 18px;
}
.checks {
	position: relative;
	padding-top: 3px;
	margin-bottom: 4px;
}
.checks label {
	display: flex;
	align-items: center;
	gap: 4px;
	height: 23px;
}
.checks input {
	width: 13px;
	height: 13px;
	appearance: none;
	background: #fff;
	border: 1px solid #333;
}
.checks .dis {
	color: #848484;
}
.checks .dis input {
	border-color: #ccc;
}
.hilite {
	position: absolute;
	left: -18px;
	top: 0;
	width: 167px;
	height: 29px;
	border: 3px solid #f91df9;
	pointer-events: none;
}
.wizard {
	width: 229px;
	height: 21px;
}
.dlg-right {
	flex: 1;
	display: flex;
	flex-direction: column;
}
.preview {
	flex: 1;
	background: #fff;
	border: 1px solid #828790;
	box-shadow: inset 1px 1px #000;
}
.preview svg {
	width: 100%;
	height: 100%;
}
.preview text {
	fill: #800080;
	font-size: 9px;
}
.dlg-btns {
	display: flex;
	justify-content: flex-end;
	gap: 8px;
	padding-top: 8px;
}
.dlg-btns .btn {
	width: 73px;
	height: 21px;
}
.dlg-btns .ok {
	border: 2px solid #0078d7;
}
.tip {
	position: absolute;
	left: 191px;
	top: 334px;
	color: #fb3b3b;
	font: 16px/22px "Noto Sans CJK SC", sans-serif;
}
.resize {
	position: absolute;
	right: 2px;
	bottom: 2px;
}
```
